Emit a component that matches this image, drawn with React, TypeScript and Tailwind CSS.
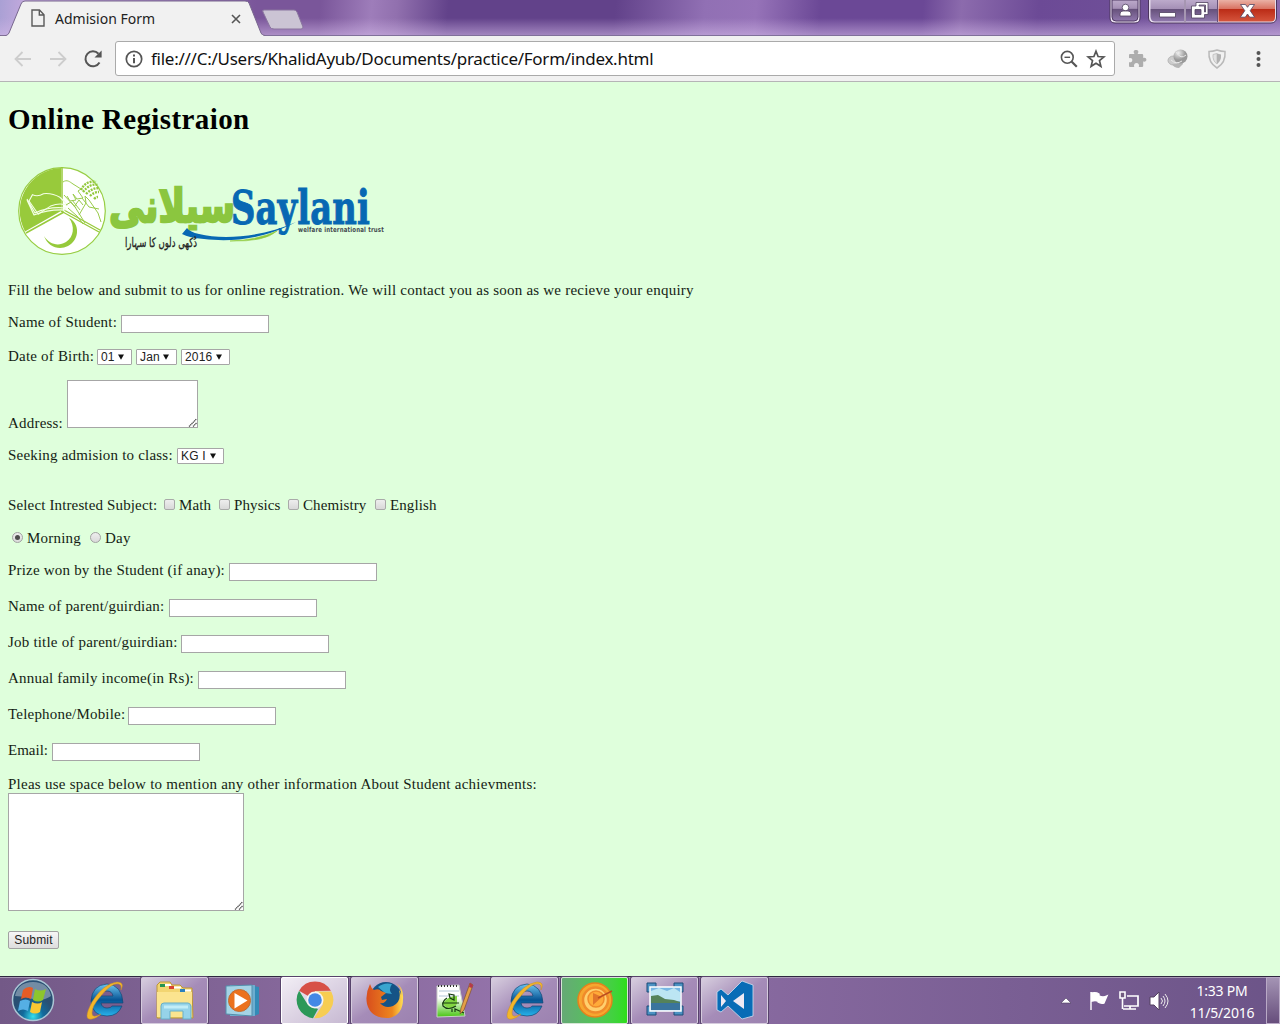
import React from "react";

const serif = "font-['Liberation_Serif',serif]";

function Label({ children, className }: { children: React.ReactNode; className: string }) {
  return <span className={`shrink-0 whitespace-nowrap ${className}`}>{children}</span>;
}

function TextInput() {
  return <input type="text" className="mt-[3px] h-[18px] w-[148px] shrink-0 border border-[#a6a6a6] bg-white px-1 text-xs outline-none" />;
}

function Select({ value, className }: { value: string; className: string }) {
  return (
    <button className={`mt-[2px] flex h-4 shrink-0 items-center justify-between rounded-[1px] border border-[#a6a6a6] bg-white pl-[3px] pr-[7px] font-['Liberation_Sans',sans-serif] text-[12px] leading-[14px] text-[#222] ${className}`}>
      <span className="whitespace-pre tracking-[0.2px]">{value}</span>
      <svg width="6" height="6" viewBox="0 0 6 6"><path d="M0 .5h6L3 5.8z" fill="#111" /></svg>
    </button>
  );
}

function Grip() {
  return (
    <svg className="absolute bottom-0 right-0" width="9" height="9" viewBox="0 0 9 9">
      <path d="M1 8.5 8.5 1M5 8.5 8.5 5" stroke="#444" strokeWidth="1.2" strokeDasharray="1.3 .5" />
    </svg>
  );
}

function Check({ label, className }: { label: string; className: string }) {
  return (
    <label className={`flex shrink-0 items-center tracking-[0.1px] ${className}`}>
      <span className="mb-[2px] mr-1 h-[11px] w-[11px] shrink-0 rounded-[2px] border border-[#a9aaa9] bg-linear-to-b from-[#eee] to-[#d9d9d9]" />
      <span className="whitespace-nowrap">{label}</span>
    </label>
  );
}

function Radio({ label, on, className }: { label: string; on?: boolean; className: string }) {
  return (
    <label className={`flex shrink-0 items-center tracking-[0.2px] ${className}`}>
      <span className="mb-px mr-1 flex h-[11px] w-[11px] shrink-0 items-center justify-center rounded-full border border-[#a2a2a2] bg-linear-to-b from-[#eee] to-[#dadada]">
        {on && <span className="h-[5px] w-[5px] rounded-full bg-[#4d4d4d]" />}
      </span>
      <span className="whitespace-nowrap">{label}</span>
    </label>
  );
}

function Field({ label, className }: { label: string; className: string }) {
  return (
    <div className="mb-4 flex h-5 items-center">
      <Label className={className}>{label}</Label>
      <TextInput />
    </div>
  );
}

function TitleBar() {
  return (
    <header className="relative flex h-9 items-start bg-[linear-gradient(95deg,#a9a0d4_0%,#c3a9dd_2%,#7a569a_20%,#7a569a_25%,#9e7dba_29%,#9170ae_31%,#62428a_35%,#62428a_48%,#9170b4_55%,#9673b8_59%,#6b4896_64%,#6b4896_72%,#8c6bad_75%,#6c4a96_81%,#6f4f98_88%,#8a6aae_100%)]">
      <div className="absolute inset-0 bg-linear-to-b from-transparent from-50% to-[#d3b9e8]/60" />
      <div className="absolute inset-x-0 bottom-0 h-px bg-[#80709a]" />
      <div className="relative flex h-9 w-[265px] shrink-0 items-center">
        <svg className="absolute left-0 top-0" width="268" height="36" viewBox="0 0 268 36">
          <path d="M0 36 6 35.5Q8 35 9 33L21 4Q22 1 25 1H245Q248 1 249 3L261 33Q262 35.5 265 35.5V36" fill="#f1f1f1" stroke="#78678e" />
          <path d="M8 36H263" stroke="#f1f1f1" strokeWidth="2" />
        </svg>
        <svg className="relative ml-[31px] shrink-0" width="14" height="18" viewBox="0 0 14 18" fill="none" stroke="#5a5a5a" strokeWidth="1.4">
          <path d="M1 1H8.5L13 5.7V17H1ZM8.3 1V6H13" />
        </svg>
        <span className="relative ml-[10px] w-[176px] shrink-0 whitespace-nowrap pt-[1px] font-['Noto_Sans',sans-serif] text-[14px] tracking-[0.02px] text-[#222]">Admision Form</span>
        <svg className="relative mt-[2px] shrink-0" width="10" height="10" viewBox="0 0 10 10" stroke="#555" strokeWidth="1.6"><path d="m1 1 8 8M9 1 1 9" /></svg>
      </div>
      <svg className="relative -ml-[4px] mt-[9px] shrink-0" width="44" height="22" viewBox="0 0 44 22">
        <path d="M3 1H33Q35 1 36 3L42 18Q42 20 40 20H13Q10 20 9 18L2 3Q1 1 3 1Z" fill="#cbc4d4" stroke="#8a759f" />
      </svg>
      <svg className="absolute right-0 top-0" width="174" height="26" viewBox="1106 0 174 26">
        <defs>
          <linearGradient id="cap" x2="0" y2="1"><stop offset="0" stopColor="#bcaacb" /><stop offset=".4" stopColor="#a590b6" /><stop offset=".43" stopColor="#66517b" /><stop offset="1" stopColor="#9078ad" /></linearGradient>
          <linearGradient id="red" x2="0" y2="1"><stop offset="0" stopColor="#eab1a5" /><stop offset=".4" stopColor="#d97463" /><stop offset=".44" stopColor="#bb2c17" /><stop offset="1" stopColor="#d5543c" /></linearGradient>
        </defs>
        <path d="M1110 0V18Q1110 23 1115 23H1135Q1140 23 1140 18V0" fill="#e6dced" stroke="#4c365f" />
        <path d="M1112 0V17Q1112 21 1116 21H1134Q1138 21 1138 17V0Z" fill="url(#cap)" stroke="#503b64" />
        <path d="M1148.500 0V18Q1149 23 1154 23H1271Q1276 23 1276.500 18V0" fill="#e6dced" stroke="#4c365f" />
        <path d="M1150.500 0V17Q1151 21.500 1155 21.500H1184V0Z" fill="url(#cap)" />
        <path d="M1186 0H1217V21.500H1186Z" fill="url(#cap)" />
        <path d="M1218.500 0H1275V17Q1275 21.500 1271 21.500H1218.500Z" fill="url(#red)" />
        <path d="M1185 0V22M1217.500 0V22" stroke="#665077" />
        <g fill="#fff" stroke="#51435f" strokeWidth=".8">
          <circle cx="1125.500" cy="7.500" r="3.300" /><path d="M1120 16v-2q0-3 3-3h5q3 0 3 3v2z" />
          <path d="M1159.500 12.500h16v4.500h-16z" />
          <path fillRule="evenodd" d="M1196 2.500h12v12h-3.500V18h-13V6h4.500zM1195 9.500v5h6v-5zM1199 5v1h5.500v6h1V5z" />
          <path d="M1240.500 4.500h5l2 2.800 2-2.800h5l-4.300 6.200 4.500 6.500h-5l-2.200-3.200-2.200 3.200h-5l4.500-6.500z" />
        </g>
      </svg>
    </header>
  );
}

function Toolbar() {
  return (
    <div className="flex h-[46px] items-center border-b border-[#b5b4b6] bg-[#f1f1f1]">
      <svg className="ml-[14px] shrink-0" width="53" height="18" viewBox="0 0 53 18" fill="none" stroke="#cdcdcd" strokeWidth="1.8">
        <path d="M17 9H2M8.500 2 1.500 9l7 7M36 9H51M44.500 2 51.500 9l-7 7" />
      </svg>
      <svg className="ml-[16px] shrink-0" width="20" height="20" viewBox="0 0 20 20" fill="none">
        <path d="M16.500 13.500A7.500 7.500 0 1 1 15.500 4.700" stroke="#555" strokeWidth="2" /><path d="M18.600 1.500V8.500H11.500z" fill="#555" />
      </svg>
      <div className="ml-[12px] flex h-[35px] w-[1000px] shrink-0 items-center rounded-[3px] border border-[#aaa] bg-white">
        <svg className="ml-[9px] shrink-0" width="18" height="18" viewBox="0 0 18 18" fill="none" stroke="#555" strokeWidth="1.700">
          <circle cx="9" cy="9" r="7.700" /><path d="M9 8v5.200M9 4.400v2" strokeWidth="2" />
        </svg>
        <span className="ml-[8px] w-[909px] shrink-0 whitespace-nowrap font-['Noto_Sans',sans-serif] text-[17px] tracking-[-0.26px] text-[#111]">file:///C:/Users/KhalidAyub/Documents/practice/Form/index.html</span>
        <svg className="shrink-0" width="18" height="18" viewBox="0 0 18 18" fill="none" stroke="#555" strokeWidth="1.600"><circle cx="7.300" cy="7.300" r="5.900" /><path d="M4.500 7.300h5.600" strokeWidth="1.400" /><path d="m11.500 11.500 5.300 5.300" strokeWidth="2.200" /></svg>
        <svg className="ml-[8px] shrink-0" width="20" height="20" viewBox="0 0 20 20" fill="none" stroke="#555" strokeWidth="1.700"><path d="m10 2.200 2.100 5.300 5.900.4-4.500 3.700 1.400 5.700-4.900-3.100-4.900 3.100 1.400-5.700L2 7.900l5.900-.4z" /></svg>
      </div>
      <svg className="ml-[12px] shrink-0" width="20" height="20" viewBox="0 0 20 20" fill="#adadad"><path d="M3 5h4.500C5.800 2.500 7 1 9 1s3.300 1.500 1.600 4H15q1.200 0 1.200 1.200V9c2-.5 3.200.3 3.200 1.800s-1.200 2.200-3.200 1.700V17q0 1-1.200 1h-3.200c.8-2.500-.6-4-2.300-4s-3 1.500-2.300 4H3q-1 0-1-1v-3.700c2.300.3 3.300-.9 3.300-2.300S4.300 8.700 2 9.200V6q0-1 1-1z" /></svg>
      <svg className="ml-[20px] shrink-0" width="22" height="22" viewBox="0 0 22 22">
        <defs><radialGradient id="globe" cx=".35" cy=".25"><stop stopColor="#eee" /><stop offset="1" stopColor="#999" /></radialGradient></defs>
        <ellipse cx="6.500" cy="12.500" rx="5.500" ry="4.500" fill="#ccc" stroke="#b5b5b5" /><path d="M5 16c5 1 8-1 10-4l1 4-4 4q-5 0-7-4z" fill="#b5b5b5" />
        <circle cx="13.500" cy="8.500" r="7" fill="url(#globe)" /><path d="M9 4q5 8 10 3M4 12q5 5 11 1" stroke="#e9e9e9" fill="none" />
      </svg>
      <svg className="ml-[18px] shrink-0" width="20" height="20" viewBox="0 0 20 20" fill="none">
        <path d="M10 1q4 1.500 8 1.500 1 11-8 16.500Q1 13.500 2 2.500 6 2.500 10 1z" stroke="#b9b9b9" strokeWidth="1.500" /><path d="M6 5.500 10 4.500V15Q5.500 12 6 5.500z" fill="#e2e2e2" stroke="#c5c5c5" /><path d="M10 4.500l4 1Q14.500 12 10 15z" fill="#b1b1b1" />
      </svg>
      <svg className="ml-[28px] shrink-0" width="6" height="20" viewBox="0 0 6 20" fill="#555"><circle cx="3.500" cy="4" r="2" /><circle cx="3.500" cy="10" r="2" /><circle cx="3.500" cy="16" r="2" /></svg>
    </div>
  );
}

function SaylaniLogo() {
  return (
    <svg className="shrink-0" width="392" height="141" viewBox="8 138 392 141" fill="none">
      <circle cx="62" cy="211" r="43.300" fill="#fff" stroke="#98cd43" strokeWidth="1.200" />
      <path d="M61 211V168A43 43 0 0 0 25 231.500z" fill="#98ca3b" />
      <path d="M62 167v45M64 212 26 233" stroke="#98ca3b" strokeWidth="1.500" />
      <path d="m61 211 38 21M64 210l36 20" stroke="#98ca3b" strokeWidth="1.300" />
      <path d="m29 200 4-6q5 3 11 0 9 0 16 5 4 4 7 9-7-4-17-1-6 3-13 7z" transform="rotate(-5 40 200)" stroke="#f3ffe5" strokeWidth="1.100" strokeLinejoin="round" />
      <path d="m28 200 8 14q14-7 31-5l-1 2q-16-1-31 5l-7-15" transform="translate(-1 -1)" stroke="#f3ffe5" strokeWidth="1.200" strokeLinejoin="round" />
      <path d="M69 218c11 5 11 22-1 28-9 4.500-20 1-24-10 5 8 14 11 22 6 8-5 9-16 3-24z" fill="#96ca3b" />
      <path d="M63 182c4-3 7 0 10 2l8 5-3 2 5 7-6 1-4-5 3 6-6 1-3-5M64 195l11 12 10 16M66 205l5-3 5 6M74 207l5-7 4 5M79 215l7-12-1-7 4 4 9 13 3 9M82 198l7 9 10 2M72 200l8 10M68 208l9 8 6 8" stroke="#99cb4b" strokeLinejoin="round" />
      <path d="M81 190q5-10 15-8M83 192q7-9 15-7M86 194q6-6 13-6M90 196q4-4 9-4M94 199q2-2 4-2" stroke="#92c83d" strokeWidth="2.400" strokeDasharray="2 1" />
      <text x="109" y="222" direction="rtl" textAnchor="end" textLength="126" lengthAdjust="spacingAndGlyphs" fill="#8bc63f" stroke="#8bc63f" strokeWidth="2.400" fontSize="46" className="font-['DejaVu_Sans',sans-serif] font-bold">سیلانی</text>
      <text x="231" y="224" textLength="139" lengthAdjust="spacingAndGlyphs" fill="#0768b3" stroke="#0768b3" strokeWidth="1" fontSize="47" className="font-['DejaVu_Serif',serif] font-bold">Saylani</text>
      <path d="M182 234l5-6q3 4 12 6c25 6 63 3 97-12-34 18-66 20-92 17q-15-1-22-5z" fill="#0768b3" />
      <path d="M230 241q28-1 47-10-12 11-47 10z" fill="#91ca3e" stroke="#91ca3e" strokeWidth=".6" />
      <text x="298" y="232" textLength="86" lengthAdjust="spacingAndGlyphs" fill="#444b50" fontSize="7" className="font-['DejaVu_Sans',sans-serif] font-bold">welfare international trust</text>
      <text x="125" y="247" direction="rtl" textAnchor="end" textLength="72" lengthAdjust="spacingAndGlyphs" fill="#222" stroke="#222" strokeWidth=".3" fontSize="13" className="font-['DejaVu_Sans',sans-serif]">دُکھی دلوں کا سہارا</text>
    </svg>
  );
}

function RegistrationPage() {
  return (
    <main className={`h-[894px] bg-[#dfffdc] pl-2 pt-[18px] text-[15px] leading-5 tracking-[0.2px] text-[#151d14] ${serif}`}>
      <h1 className="h-[38px] text-[29px] font-bold leading-[38px] tracking-[0.4px] text-black">Online Registraion</h1>
      <SaylaniLogo />
      <p className="mb-[12px] mt-px h-5 whitespace-nowrap tracking-[0.22px]">Fill the below and submit to us for online registration. We will contact you as soon as we recieve your enquiry</p>
      <div className="mb-[14px] flex h-5 items-center"><Label className="w-[113px]">Name of Student:</Label><TextInput /></div>
      <div className="mb-[14px] flex h-5 items-center gap-1">
        <Label className="w-[85px]">Date of Birth:</Label>
        <Select value="01" className="w-[35px]" /><Select value="Jan" className="w-[41px]" /><Select value="2016" className="w-[49px]" />
      </div>
      <div className="mb-[17px] flex h-12 items-end">
        <Label className="-mb-[5px] w-[59px]">Address:</Label>
        <div className="relative h-12 w-[131px] border border-[#a6a6a6] bg-white"><Grip /></div>
      </div>
      <div className="mb-[30px] flex h-5 items-center"><Label className="w-[169px]">Seeking admision to class:</Label><Select value="KG I" className="w-[47px]" /></div>
      <div className="mb-[13px] flex h-5 items-center">
        <Label className="w-[156px] tracking-[0.14px]">Select Intrested Subject:</Label>
        <Check label="Math" className="w-[55px]" /><Check label="Physics" className="w-[69px]" /><Check label="Chemistry" className="w-[87px]" /><Check label="English" className="" />
      </div>
      <div className="mb-[12px] flex h-5 items-center pl-1"><Radio label="Morning" on className="w-[78px]" /><Radio label="Day" className="" /></div>
      <Field label="Prize won by the Student (if anay):" className="w-[221px]" />
      <Field label="Name of parent/guirdian:" className="w-[161px]" />
      <Field label="Job title of parent/guirdian:" className="w-[173px]" />
      <Field label="Annual family income(in Rs):" className="w-[190px]" />
      <Field label="Telephone/Mobile:" className="w-[120px]" />
      <Field label="Email:" className="w-[44px] tracking-[0px]" />
      <p className="-mt-[2px] h-[19px] whitespace-nowrap tracking-[0.25px]">Pleas use space below to mention any other information About Student achievments:</p>
      <div className="relative h-[118px] w-[236px] border border-[#a6a6a6] bg-white"><Grip /></div>
      <button className="mt-[20px] flex h-[18px] w-[51px] items-center justify-center rounded-[2px] border border-[#a1a1a1] bg-linear-to-b from-[#f6f6f6] to-[#ddd] font-['Liberation_Sans',sans-serif] text-[12px] text-[#222]">Submit</button>
    </main>
  );
}

function IEIcon() {
  return (
    <svg className="-mt-[3px] -ml-[2px]" width="42" height="42" viewBox="0 0 42 42" fill="none">
      <defs><linearGradient id="ie" x2="0" y2="1"><stop stopColor="#6dc5f1" /><stop offset=".5" stopColor="#075494" /><stop offset="1" stopColor="#27b3eb" /></linearGradient></defs>
      <path d="M40 25H18q1 5 6 5 4 0 5-2h10q-4 10-15 10Q9 38 8 23 9 7 24 6q15 1 16 19zM18 18h12q-1-5-6-5t-6 5z" fill="url(#ie)" fillRule="evenodd" stroke="#164672" strokeWidth=".7" />
      <path d="M38 12q4-8-4-8Q20 6 9 24-1 43 9 41q5-1 9-5-9 5-9-1 0-7 8-16Q29 4 36 6q3 1 2 6z" fill="#f3b62a" stroke="#c68c29" strokeWidth=".5" />
    </svg>
  );
}

function ExplorerIcon() {
  return <svg width="40" height="40" viewBox="0 0 40 40"><path d="M2 4 5 1h10l2 3h8l3 3h9l1 30H2z" fill="#f2d571" stroke="#bc9638" /><path d="M5 3h5v3H5z" fill="#279451" /><path d="M14 5h5v3h-5z" fill="#d94330" /><path d="M25 8h5v3h-5z" fill="#2c80bc" /><path d="M10 4h6M19 6.500h7M30 9.500h6" stroke="#fff" strokeWidth="2" /><path d="M2 11h35v25H2z" fill="#fbe48f" /><path d="M6 38V25q0-3 3-3h24q2 0 3 3v13h-8v-8H15v8z" fill="#96d3e9" stroke="#67afc8" /><path d="M9 26h24" stroke="#c2edf8" strokeWidth="3" /></svg>;
}
function WmpIcon() {
  return <svg width="36" height="36" viewBox="0 0 36 36"><path d="m29 3 5 1v27l-5 2z" fill="#338bb7" /><path d="M5 2h25v31H5z" fill="#6daed0" /><path d="M1 3 27 2v31L1 31z" fill="#a5d3e5" stroke="#538dab" /><circle cx="14.500" cy="17.500" r="11" fill="#eb711e" stroke="#bc6d37" /><path d="m9.500 10 13 7.500-13 8z" fill="#fff" /></svg>;
}
function ChromeIcon() {
  return <svg className="-mt-[2px]" width="38" height="38" viewBox="0 0 38 38"><path d="M19 19 3.100 9.800A18.300 18.300 0 0 1 34.900 9.800L19 10z" fill="#d75147" /><path d="M19 10.500h16.200A18.300 18.300 0 0 1 18 37.200l9-14z" fill="#f7cd52" /><path d="M3.100 9.800 12 24l10 4-5 9.200A18.300 18.300 0 0 1 3.100 9.800z" fill="#2c9858" /><circle cx="19" cy="19" r="8.500" fill="#f5f5f3" /><circle cx="19" cy="19" r="6.800" fill="#4388e5" /></svg>;
}
function FirefoxIcon() {
  return <svg className="-mt-[2px]" width="38" height="38" viewBox="0 0 38 38"><defs><linearGradient id="fox" x1="0" x2="1"><stop stopColor="#d84e1d" /><stop offset=".7" stopColor="#ed861e" /><stop offset="1" stopColor="#ffe055" /></linearGradient></defs><circle cx="20" cy="17" r="16" fill="#145386" /><path d="M12 6Q18 1 26 3q-4 6 0 10l-7-1z" fill="#38a5cf" /><path d="M4 3q1 4 4 6 5-2 7 1l5 2-5 4 1 3 5-1q-2 5-7 4 5 6 13 3 9-5 6-16 2 2 2 5 1-7-5-12 8 5 7 16 0 16-14 19Q5 38 1 23-1 13 4 3z" fill="url(#fox)" /></svg>;
}
function NotepadIcon() {
  return <svg width="38" height="38" viewBox="0 0 38 38"><defs><linearGradient id="note" x2="0" y2="1"><stop offset=".4" stopColor="#fff" /><stop offset="1" stopColor="#48c612" /></linearGradient></defs><path d="m1 4 22-1 6 31-28 1z" fill="url(#note)" stroke="#c9cec9" /><path d="M2 4h20" stroke="#333" strokeWidth="2" strokeDasharray="1 2" /><path d="M3 9h20M3 14h20" stroke="#b4c6d6" /><path d="M7 22q4-8 14-8v8q-7 8-14 0z" fill="#83d642" /><path d="M6 21h17M11 16q-5 3-4 8 5 5 13 0M13 12l5 1v5l-4-2zM16 30v-3M19 30v-3l9 4" fill="none" stroke="#173a10" strokeWidth="1.200" /><path d="m34 1 3 2-9 25-4 4 1-6z" fill="#e4a047" stroke="#81502d" strokeWidth=".7" /><path d="m34 1 3 2-1 3-3-1z" fill="#b5384c" /></svg>;
}
function TargetIcon() {
  return <svg className="-mt-[2px]" width="38" height="38" viewBox="0 0 38 38" fill="none"><circle cx="19" cy="19" r="17" fill="#f6a72f" stroke="#e4821c" strokeWidth="1.500" /><circle cx="19.500" cy="19" r="12.500" fill="#ffcf6d" stroke="#f08b2a" strokeWidth="2.500" /><circle cx="20" cy="18" r="8" fill="#ffab39" stroke="#f08b2a" strokeWidth="1.500" /><path d="m17 12 9 4-9 8z" fill="#e2762a" /><path d="m22 17 14-7" stroke="#bb4e21" strokeWidth="1.500" /></svg>;
}
function PhotoIcon() {
  return <svg className="-mt-[3px]" width="38" height="34" viewBox="0 0 38 34"><path d="M1 1h9v9H1zM28 1h9v9h-9zM1 24h9v9H1zM28 24h9v9h-9z" fill="#4b91c2" stroke="#1d4c78" /><path d="M4 5h31v24H4z" fill="#78b7e3" stroke="#fff" strokeWidth="1.500" /><path d="m5 9 8-3 8 3 7-3 6 4v9H5z" fill="#bce5f3" /><path d="m5 14 7-1 7 4 9 1 6 2v3H5z" fill="#55825a" /><path d="M5 21h29v7H5z" fill="#3a749d" /></svg>;
}
function CodeIcon() {
  return <svg className="-mt-[2px]" width="40" height="40" viewBox="0 0 40 40"><path fillRule="evenodd" d="m27 1 11 4v31l-11 3-14-13-7 6-4-2V12l4-3 7 6z" fill="#086cb6" stroke="#d2dff0" strokeWidth=".8" /><path d="M6 15v12l5-6zM18 21l11 8V13z" fill="#eee9f3" /></svg>;
}

function Task({ children, state = "open" }: { children: React.ReactNode; state?: "plain" | "open" | "active" | "green" }) {
  const look = {
    plain: "border-transparent",
    open: "border-[#d5cbdd] bg-linear-to-br from-[#d7cede] via-[#a58cb8] via-50% to-[#9c82b0] shadow-[0_0_0_1px_#57436b]",
    active: "border-white bg-linear-to-br from-[#f2eef5] to-[#c7b9d2] shadow-[0_0_0_1px_#57436b]",
    green: "border-[#d5e6d5] bg-linear-to-r from-[#65a975] to-[#2ddd18] shadow-[0_0_0_1px_#57436b]",
  }[state];
  return <div className={`flex h-[47px] w-[67px] shrink-0 items-center justify-center rounded-[2px] border ${look}`}>{children}</div>;
}

function Taskbar() {
  return (
    <footer className="flex h-12 items-start border-t border-[#2f2840] bg-linear-to-r from-[#735987] via-[#9473aa] via-40% to-[#6c5488] shadow-[inset_0_1px_0_#a899b5]">
      <svg className="ml-[11px] mt-[1px] shrink-0" width="44" height="44" viewBox="0 0 44 44">
        <defs><radialGradient id="orb" cy=".9"><stop stopColor="#38dfec" /><stop offset=".5" stopColor="#116b9d" /><stop offset="1" stopColor="#294f73" /></radialGradient></defs>
        <circle cx="22" cy="22" r="20.500" fill="url(#orb)" stroke="#abc6d5" strokeWidth="1.500" /><path d="M4 18Q7 4 22 4t18 14q-9 6-18 3T4 18z" fill="#fff" opacity=".35" />
        <path d="M12 12q5-5 10-2l-2 11q-5-3-10 0z" fill="#e65c26" /><path d="M24 11q5 3 11 0l-3 11q-5 3-10 0z" fill="#8dc52d" /><path d="M9 23q6-3 10 0l-2 10q-5-3-10 0z" fill="#55afe4" /><path d="M21 24q6 3 10 0l-2 10q-5 3-10 0z" fill="#fbc832" />
      </svg>
      <div className="ml-4 flex gap-[3px]">
        <Task state="plain"><IEIcon /></Task><Task><ExplorerIcon /></Task><Task state="plain"><div className="mr-1"><WmpIcon /></div></Task><Task state="active"><ChromeIcon /></Task><Task><FirefoxIcon /></Task><Task state="plain"><NotepadIcon /></Task><Task><IEIcon /></Task><Task state="green"><TargetIcon /></Task><Task><PhotoIcon /></Task><Task><CodeIcon /></Task>
      </div>
      <svg className="ml-auto mt-[11px] shrink-0" width="112" height="26" viewBox="0 0 112 26">
        <path d="m4 15 5-5 5 5z" fill="#fff" stroke="#4d3c60" strokeWidth=".6" />
        <path d="M34 4v18M35 5q4-1 7 1v2q4 2 8 0l-3 7q-3 1-6-1v-1q-3-1-6 0z" fill="#fff" stroke="#fff" strokeWidth="1.400" />
        <path d="M70 8h11v10H67M66 21h13M73 18v3" fill="none" stroke="#fff" strokeWidth="1.700" /><path d="M63 4h5v6h-5zM65.500 10v11" fill="#715b80" stroke="#fff" strokeWidth="1.600" />
        <path d="M93 9h4l5-5v18l-5-5h-4z" fill="#fff" stroke="#554361" /><path d="M104 10q3 3 0 6M106 8q4 5 0 10M108 6q6 7 0 14" fill="none" stroke="#eee" strokeWidth="1" />
      </svg>
      <div className="ml-[13px] w-[80px] shrink-0 pt-[3px] text-center font-['Noto_Sans',sans-serif] text-[14px] leading-[22px] tracking-[-0.2px] text-white"><div>1:33 PM</div><div className="whitespace-nowrap">11/5/2016</div></div>
      <div className="ml-[4px] h-[47px] w-[14px] shrink-0 border border-[#b9a9c6] bg-linear-to-b from-[#a494b4] to-[#674e7c]" />
    </footer>
  );
}

export default function App() {
  return (
    <div className="flex h-[1024px] w-[1280px] flex-col overflow-hidden">
      <TitleBar />
      <Toolbar />
      <RegistrationPage />
      <Taskbar />
    </div>
  );
}
